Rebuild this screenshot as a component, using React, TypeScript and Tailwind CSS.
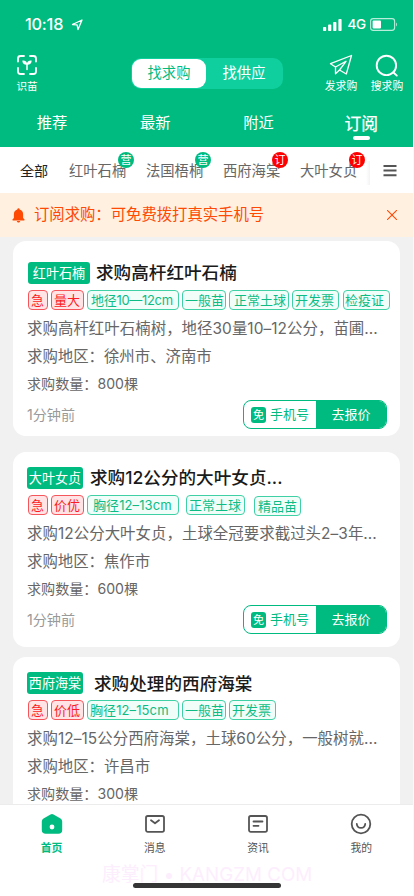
import React, { useState } from 'react';
import clsx from 'clsx';

type Chip = { label: string; red?: boolean; box: string };

type Demand = {
  id: number;
  kind: string;
  kindBox: string;
  title: string;
  titleBox: string;
  chips: Chip[];
  desc: string;
  area: string;
  amount: string;
  cardBox: string;
};

const FILTERS = [
  { label: '红叶石楠', badge: '营', color: 'bg-[#00bb7f]' },
  { label: '法国梧桐', badge: '营', color: 'bg-[#00bb7f]' },
  { label: '西府海棠', badge: '订', color: 'bg-[#fd0001]' },
  { label: '大叶女贞', badge: '订', color: 'bg-[#fd0001]' },
];

const DEMANDS: Demand[] = [
  {
    id: 1,
    kind: '红叶石楠',
    kindBox: 'w-[62px] ml-px',
    title: '求购高杆红叶石楠',
    titleBox: 'ml-[6px]',
    chips: [
      { label: '急', red: true, box: 'w-5 pl-[2px]' },
      { label: '量大', red: true, box: 'w-[33px] ml-[3px] pl-[2px]' },
      { label: '地径10—12cm', box: 'w-[92px] ml-[3px] pl-[3px] tracking-[-0.3px]' },
      { label: '一般苗', box: 'w-11 ml-[3px] pl-[2px]' },
      { label: '正常土球', box: 'w-[60px] ml-[3px] pl-[4px]' },
      { label: '开发票', box: 'w-[47px] ml-[3px] pl-[2px]' },
      { label: '检疫证', box: 'w-[47px] ml-1 pl-px' },
    ],
    desc: '求购高杆红叶石楠树，地径30量10–12公分，苗圃...',
    area: '徐州市、济南市',
    amount: '800棵',
    cardBox: 'pt-5 h-[195px]',
  },
  {
    id: 2,
    kind: '大叶女贞',
    kindBox: 'w-[56px]',
    title: '求购12公分的大叶女贞...',
    titleBox: 'ml-[7px]',
    chips: [
      { label: '急', red: true, box: 'w-5 pl-[2px]' },
      { label: '价优', red: true, box: 'w-[33px] ml-[3px] pl-[2px]' },
      { label: '胸径12–13cm', box: 'w-[92px] ml-[3px] pl-[5px] tracking-[0.1px]' },
      { label: '正常土球', box: 'w-[59px] ml-[7px] pl-[2px]' },
      { label: '精品苗', box: 'w-[47px] ml-[9px] pl-[3px] mt-px' },
    ],
    desc: '求购12公分大叶女贞，土球全冠要求截过头2–3年...',
    area: '焦作市',
    amount: '600棵',
    cardBox: 'mt-4 pt-[14px] h-[195px]',
  },
  {
    id: 3,
    kind: '西府海棠',
    kindBox: 'w-[56px]',
    title: '求购处理的西府海棠',
    titleBox: 'ml-[11px] pt-[2px]',
    chips: [
      { label: '急', red: true, box: 'w-5 pl-[2px]' },
      { label: '价低', red: true, box: 'w-[33px] ml-[3px] pl-[2px]' },
      { label: '胸径12–15cm', box: 'w-[92px] ml-[3px] pl-[2px] tracking-[0.1px]' },
      { label: '一般苗', box: 'w-11 ml-[3px] pl-[2px]' },
      { label: '开发票', box: 'w-[47px] ml-[3px] pl-[2px]' },
    ],
    desc: '求购12–15公分西府海棠，土球60公分，一般树就...',
    area: '许昌市',
    amount: '300棵',
    cardBox: 'mt-[10px] pt-[14px] h-[195px]',
  },
];

const StatusBar = () => (
  <div className="flex h-[49px] items-center pl-[25px] pr-[15px] text-white">
    <span className="text-[16.3px] leading-none font-medium tracking-[-0.2px]">10:18</span>
    <svg className="ml-[8px] h-3 w-3" viewBox="0 0 12 12" fill="none" stroke="currentColor" strokeWidth="1.3" strokeLinejoin="round">
      <path d="M11 1 1.500 5.500l4.600.400.900 4.600Z" />
    </svg>
    <div className="ml-auto flex items-center">
      <svg className="h-3 w-[19px]" viewBox="0 0 19 12" fill="currentColor">
        <rect x="0" y="8" width="3.2" height="4" rx="0.8" />
        <rect x="5.1" y="5.6" width="3.2" height="6.4" rx="0.8" />
        <rect x="10.2" y="3" width="3.2" height="9" rx="0.8" />
        <rect x="15.4" y="0" width="3.2" height="12" rx="0.8" />
      </svg>
      <span className="ml-[5px] text-[13.5px] leading-none font-medium tracking-[-0.2px]">4G</span>
      <svg className="ml-[4px] h-[13px] w-7" viewBox="0 0 28 13" fill="none">
        <rect x="0.6" y="0.6" width="24" height="11.8" rx="2.6" stroke="#b8eedb" strokeWidth="1.1" />
        <rect x="2.6" y="2.6" width="8.4" height="7.8" rx="1" fill="#fff" />
        <path d="M26 4.5c1.2.5 1.2 3.5 0 4Z" fill="#b8eedb" />
      </svg>
    </div>
  </div>
);

const ScanIcon = () => (
  <svg className="h-[22px] w-[22px]" viewBox="0 0 22 22" fill="none" stroke="currentColor" strokeWidth="1.8" strokeLinecap="round">
    <path d="M2 7.500V4.500A2.500 2.500 0 0 1 4.500 2H8M14 2h3.500A2.500 2.500 0 0 1 20 4.500V7.500M20 14v3.500a2.500 2.500 0 0 1-2.500 2.500H14M8 20H4.500A2.500 2.500 0 0 1 2 17.500V14" />
    <path d="M11 15.500V10.500" strokeWidth="1.500" />
    <path d="M11 10.800C8.200 11 6.500 9.500 6.300 6.700 8.700 6.300 10.500 7.300 11 9.200c.5-1.900 2.300-2.900 4.700-2.500-.2 2.800-1.900 4.300-4.700 4.100Z" fill="currentColor" stroke="none" />
  </svg>
);

const SendIcon = () => (
  <svg className="h-[22px] w-6" viewBox="0 0 24 22" fill="none" stroke="currentColor" strokeWidth="1.3" strokeLinejoin="round" strokeLinecap="round">
    <path d="M22.500 1.500 1.500 9.700l5 3.300v6.800l4-3.800 6.800 4Z" />
    <path d="M6.500 13 17 7.300 10.500 16" />
  </svg>
);

const SearchIcon = () => (
  <svg className="h-6 w-6" viewBox="0 0 24 24" fill="none" stroke="currentColor" strokeWidth="1.9" strokeLinecap="round">
    <circle cx="11.400" cy="11.400" r="9.700" />
    <path d="m18.500 18.500 3.300 3.100" />
  </svg>
);

const Header = () => {
  const [mode, setMode] = useState<'buy' | 'supply'>('buy');
  const tabs = ['推荐', '最新', '附近'];

  return (
    <header className="h-[147px] bg-[#00bb7f] text-white">
      <StatusBar />
      <div className="flex h-[50px] pr-[10px] pl-4">
        <div className="flex w-[22px] flex-col items-center pt-[5px]">
          <ScanIcon />
          <span className="mt-[5px] text-[10.6px] leading-3 whitespace-nowrap">识苗</span>
        </div>
        <div className="mt-[9px] ml-[93px] flex h-[31px] w-[152px] rounded-[10px] bg-[#10cf9f] p-px text-[14.3px]">
          <button
            onClick={() => setMode('buy')}
            className={clsx('h-[29px] w-[74px] rounded-[9px] pb-px', mode === 'buy' && 'bg-white text-[#00bb7f]')}
          >
            找求购
          </button>
          <button
            onClick={() => setMode('supply')}
            className={clsx('h-[29px] w-[76px] rounded-[9px] pb-px', mode === 'supply' && 'bg-white text-[#00bb7f]')}
          >
            找供应
          </button>
        </div>
        <div className="ml-auto flex gap-[14px]">
          <div className="flex w-8 flex-col items-center pt-[5px]">
            <SendIcon />
            <span className="mt-[5px] text-[10.8px] leading-3 whitespace-nowrap">发求购</span>
          </div>
          <div className="flex w-8 flex-col items-center pt-[5px]">
            <SearchIcon />
            <span className="mt-[3px] text-[10.8px] leading-3 whitespace-nowrap">搜求购</span>
          </div>
        </div>
      </div>
      <nav className="grid h-12 grid-cols-4 text-center text-[15.3px]">
        {tabs.map((t) => (
          <span key={t} className="pt-[12px] pl-px leading-6">{t}</span>
        ))}
        <span className="flex flex-col items-center pt-[13px]">
          <b className="text-[16.8px] leading-6 font-normal [-webkit-text-stroke:0.25px_white]">订阅</b>
          <i className="h-[4px] w-[17px] rounded-full bg-white" />
        </span>
      </nav>
    </header>
  );
};

const FilterBar = () => (
  <div className="flex h-[46px] bg-white pl-5 text-[14.3px] leading-[48px] text-[#666]">
    <span className="w-[49px] text-[14.1px] text-[#222]">全部</span>
    {FILTERS.map((f) => (
      <span key={f.label} className="relative w-[77px] whitespace-nowrap">
        {f.label}
        <i
          className={clsx(
            'absolute top-[5px] left-[49px] h-[16px] w-[16px] rounded-full text-center text-[11px] leading-[16px] text-white not-italic',
            f.color,
          )}
        >
          {f.badge}
        </i>
      </span>
    ))}
    <div className="-ml-[11px] mt-[14px] h-6 w-1 bg-linear-to-r from-white to-[#f3f3f3]" />
    <svg className="mt-[17px] ml-[13px] h-[13px] w-[14px]" viewBox="0 0 14 13" stroke="#555" strokeWidth="2">
      <path d="M0.500 2h13M0.500 6.600h13M0.500 11.200h13" />
    </svg>
  </div>
);

const Notice = () => {
  const [open, setOpen] = useState(true);
  if (!open) return null;

  return (
    <div className="flex h-11 items-center bg-[#fff0e0] pr-4 pl-3 text-[#fd4a05]">
      <svg className="h-[15px] w-[13px]" viewBox="0 0 13 15" fill="currentColor">
        <path d="M6.500 0.300c.7 0 1.100.4 1.200 1.100 2.200.6 3.400 2.300 3.400 4.600v4l1.400 1.500c.3.400.1.900-.4.900H.9c-.5 0-.7-.5-.4-.9L1.900 10V6c0-2.300 1.200-4 3.400-4.600.1-.7.5-1.100 1.200-1.100ZM4.800 13.100h3.400c-.1.900-.8 1.500-1.700 1.500s-1.600-.6-1.700-1.500Z" />
      </svg>
      <span className="ml-[9px] text-[15.35px] leading-none">订阅求购：可免费拨打真实手机号</span>
      <button className="ml-auto" onClick={() => setOpen(false)}>
        <svg className="h-[10px] w-[10px]" viewBox="0 0 10 10" stroke="currentColor" strokeWidth="1.1">
          <path d="m0 0 10 10M10 0 0 10" />
        </svg>
      </button>
    </div>
  );
};

const DemandCard = ({ item }: { item: Demand }) => (
  <article className={clsx('shrink-0 rounded-[13px] bg-white pr-[13px] pl-[14px] text-[#666]', item.cardBox)}>
    <div className="flex h-[23px] items-center">
      <span className={clsx('h-[22px] rounded-[3px] bg-[#00bb7f] text-center text-[13.1px] leading-[22px] whitespace-nowrap text-white', item.kindBox)}>
        {item.kind}
      </span>
      <h2 className={clsx('text-[17.6px] leading-[22px] font-medium whitespace-nowrap text-[#1a1a1a]', item.titleBox)}>
        {item.title}
      </h2>
    </div>
    {/* attribute chips */}
    <div className="mt-[6px] ml-px flex h-5 text-[13px] leading-[19px]">
      {item.chips.map((c) => (
        <span
          key={c.label}
          className={clsx(
            'h-5 shrink-0 rounded-[4px] border whitespace-nowrap',
            c.red ? 'border-[#f5565b] bg-[#ffe3e5] text-[#fb1c24]' : 'border-[#3fd0a5] bg-[#f1fdf9] text-[#0dbc84]',
            c.box,
          )}
        >
          {c.label}
        </span>
      ))}
    </div>
    <p className="mt-[5px] text-[15.4px] leading-7 tracking-[0.07px] whitespace-nowrap">{item.desc}</p>
    <p className="text-[15.4px] leading-7">求购地区：{item.area}</p>
    <p className="text-[14.1px] leading-[25px]">求购数量：{item.amount}</p>
    <div className="mt-[4px] flex h-[29px] items-center justify-between">
      <span className="text-[14.1px] text-[#999]">1分钟前</span>
      <div className="flex h-[29px] w-36 overflow-hidden rounded-[8px] border border-[#00bb7f] text-[13px]">
        <button className="flex w-[72px] items-center pl-[7px] whitespace-nowrap text-[#00bb7f]">
          <i className="mr-1 h-4 w-[15px] rounded-[3px] bg-[#00bb7f] text-center text-[11px] leading-4 text-white not-italic">免</i>
          手机号
        </button>
        <button className="flex-1 bg-[#00bb7f] text-white">去报价</button>
      </div>
    </div>
  </article>
);

const HomeIcon = () => (
  <svg className="h-[22px] w-[22px]" viewBox="0 0 22 22">
    <path d="M9.500 1.400q1.500-.9 3 0l7 4q1.700 1 1.700 3V17q0 3.800-3.800 3.800H4.800Q.8 20.800.8 17V8.400q0-2 1.700-3Z" fill="#00bb7f" />
    <circle cx="11" cy="14" r="2.400" fill="#fff" />
  </svg>
);

const MessageIcon = () => (
  <svg className="h-[22px] w-[22px]" viewBox="0 0 22 22" fill="none" stroke="#555" strokeWidth="1.8" strokeLinecap="round" strokeLinejoin="round">
    <rect x="2" y="3" width="18" height="15.800" rx="1.800" />
    <path d="m7 7.300 4 3 4-3" />
  </svg>
);

const NewsIcon = () => (
  <svg className="h-[22px] w-[22px]" viewBox="0 0 22 22" fill="none" stroke="#555" strokeWidth="1.8" strokeLinecap="round">
    <rect x="2" y="3" width="18" height="15.800" rx="1.800" />
    <path d="M6.500 8.500h9M6.500 12.800h5" />
  </svg>
);

const MineIcon = () => (
  <svg className="h-[22px] w-[22px]" viewBox="0 0 22 22" fill="none" stroke="#555" strokeWidth="1.8" strokeLinecap="round">
    <circle cx="11" cy="11" r="9.300" />
    <path d="M6.800 11c.2 2.300 2 3.900 4.200 3.900s4-1.600 4.200-3.900" />
  </svg>
);

const NAV = [
  { label: '首页', icon: <HomeIcon /> },
  { label: '消息', icon: <MessageIcon /> },
  { label: '资讯', icon: <NewsIcon /> },
  { label: '我的', icon: <MineIcon /> },
];

const BottomNav = () => (
  <footer className="relative h-[92px] shrink-0 border-t border-[#ececec] bg-white">
    <div className="grid grid-cols-4">
      {NAV.map((n, i) => (
        <div key={n.label} className="flex flex-col items-center pt-[8px]">
          {n.icon}
          <span className={clsx('mt-[8px] text-[10.8px] leading-3', i === 0 ? 'font-bold text-[#00bb7f]' : 'text-[#555]')}>
            {n.label}
          </span>
        </div>
      ))}
    </div>
    <div className="mt-[8px] pl-[102px] text-[18.8px] leading-6 whitespace-nowrap text-[#fdeefd]">康掌门 • KANGZM COM</div>
    <div className="absolute top-[78px] left-[133px] h-[5px] w-[148px] rounded-full bg-[#353535]" />
  </footer>
);

export default function App() {
  return (
    <div className="h-[896px] w-full overflow-hidden bg-[#fafafa] font-['Inter','Noto_Sans_CJK_SC',sans-serif]">
      <div className="flex h-full w-[413px] flex-col bg-[#f1f1f1]">
        <Header />
        <FilterBar />
        <Notice />
        <main className="flex min-h-0 flex-1 flex-col overflow-hidden pt-1 pr-[13px] pl-[13px]">
          {DEMANDS.map((d) => (
            <DemandCard key={d.id} item={d} />
          ))}
        </main>
        <BottomNav />
      </div>
    </div>
  );
}
